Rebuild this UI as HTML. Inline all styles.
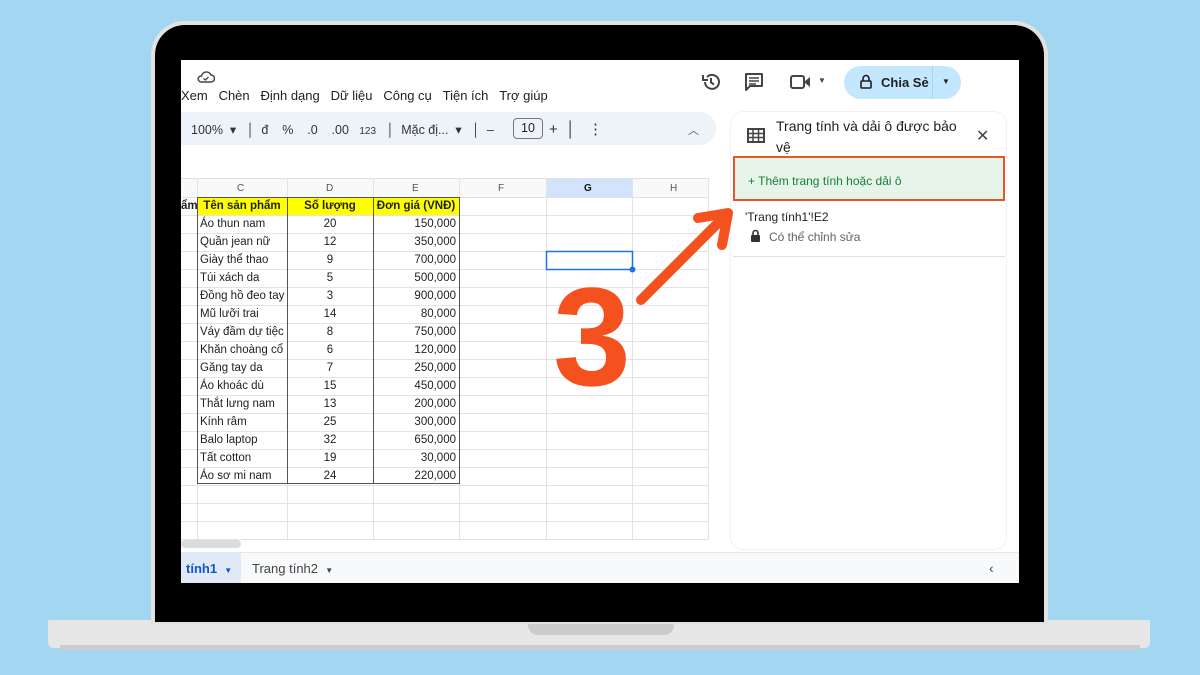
<!DOCTYPE html><html><head><meta charset="utf-8"><style>
*{margin:0;padding:0;box-sizing:border-box}
body{width:1200px;height:675px;background:#a3d7f1;position:relative;overflow:hidden;font-family:"Liberation Sans",Arial,sans-serif;color:#202124}
.a{position:absolute}
.cell{position:absolute;font-size:11.5px;height:18px;line-height:18px;white-space:nowrap}
</style></head><body>
<div class="a" style="left:48px;top:620px;width:1102px;height:28px;background:#e7e7e7;border-radius:2px 2px 6px 6px"></div>
<div class="a" style="left:60px;top:645px;width:1080px;height:5px;background:#cdcdcd"></div>
<div class="a" style="left:528px;top:620px;width:146px;height:15px;background:#cbcbcb;border-radius:0 0 10px 10px"></div>
<div class="a" style="left:151px;top:21px;width:897px;height:603px;background:#e2e2e2;border-radius:34px 34px 0 0"></div>
<div class="a" style="left:155px;top:25px;width:889px;height:597px;background:#000;border-radius:30px 30px 0 0"></div>
<div class="a" style="left:181px;top:60px;width:838px;height:523px;background:#fff;overflow:hidden">
 <svg class="a" style="left:16px;top:10px" width="18" height="13"><path d="M4 12H14A3.5 3.5 0 0 0 14 5 5 5 0 0 0 4.5 6 3 3 0 0 0 4 12Z" fill="none" stroke="#444" stroke-width="1.5"/><path d="M6.5 8.5L8.5 10 11.5 7" fill="none" stroke="#444" stroke-width="1.3"/></svg>
 <div class="a" style="left:0;top:28px;font-size:13px">Xem&nbsp;&nbsp;&nbsp;Chèn&nbsp;&nbsp;&nbsp;Định dạng&nbsp;&nbsp;&nbsp;Dữ liệu&nbsp;&nbsp;&nbsp;Công cụ&nbsp;&nbsp;&nbsp;Tiện ích&nbsp;&nbsp;&nbsp;Trợ giúp</div>
 <svg class="a" style="left:520px;top:12px" width="20" height="20"><path d="M4 10A7 7 0 1 0 6 5" fill="none" stroke="#444" stroke-width="2"/><path d="M2 3V8H7" fill="none" stroke="#444" stroke-width="2"/><path d="M10 6V10.5L13 12.5" fill="none" stroke="#444" stroke-width="2"/></svg>
 <svg class="a" style="left:563px;top:12px" width="20" height="20"><path d="M2 2H18V14H6L2 18Z" fill="none" stroke="#444" stroke-width="2" stroke-linejoin="round"/><path d="M5 6H15M5 9H15M5 12H12" stroke="#444" stroke-width="1.5"/></svg>
 <svg class="a" style="left:609px;top:14px" width="22" height="16"><rect x="1" y="2" width="13" height="12" rx="2" fill="none" stroke="#444" stroke-width="2"/><path d="M14 8L20 3V13Z" fill="#444"/></svg>
 <div class="a" style="left:637px;top:16px;font-size:8px;color:#444">▼</div>
 <div class="a" style="left:663px;top:6px;width:117px;height:33px;background:#c2e7ff;border-radius:17px"></div>
 <div class="a" style="left:751px;top:6px;width:1px;height:33px;background:#a8d4f0"></div>
 <svg class="a" style="left:679px;top:14px" width="12" height="15"><path d="M3 7V4.5A3 3 0 0 1 9 4.5V7" fill="none" stroke="#1f1f1f" stroke-width="1.6"/><rect x="1" y="7" width="10" height="7" rx="1" fill="none" stroke="#1f1f1f" stroke-width="1.6"/></svg>
 <div class="a" style="left:700px;top:15px;font-size:13px;font-weight:bold;color:#1f1f1f">Chia Sẻ</div>
 <div class="a" style="left:761px;top:17px;font-size:8px">▼</div>
 <div class="a" style="left:-20px;top:52px;width:555px;height:33px;background:#eef2f9;border-radius:17px"></div>
 <div class="a" style="left:10px;top:62px;font-size:12.5px;color:#333;white-space:nowrap">100%&nbsp;&nbsp;▾&nbsp;&nbsp;&nbsp;│&nbsp;&nbsp;đ&nbsp;&nbsp;&nbsp;&nbsp;%&nbsp;&nbsp;&nbsp;&nbsp;.0&nbsp;&nbsp;&nbsp;&nbsp;.00&nbsp;&nbsp;&nbsp;<span style="font-size:10px">123</span>&nbsp;&nbsp;&nbsp;│&nbsp;&nbsp;Mặc đị...&nbsp;&nbsp;▾&nbsp;&nbsp;&nbsp;│&nbsp;&nbsp;–&nbsp;&nbsp;</div>
 <div class="a" style="left:332px;top:58px;width:30px;height:21px;border:1px solid #777;border-radius:4px;font-size:12.5px;text-align:center;line-height:19px">10</div>
 <div class="a" style="left:368px;top:60px;font-size:15px;color:#333">+&nbsp;&nbsp;│&nbsp;&nbsp;&nbsp;⋮</div>
 <div class="a" style="left:507px;top:62px;font-size:11px;color:#555">︿</div>
 <svg class="a" style="left:0;top:0" width="528" height="523">
  <rect x="0" y="118" width="528" height="19" fill="#f8f9fa"/>
  <rect x="365" y="118" width="86" height="19" fill="#d3e3fd"/>
  <rect x="16" y="137" width="262" height="18" fill="#ffff00"/>
  <g stroke="#e1e1e1" stroke-width="1">
   <line x1="0" y1="118.5" x2="528" y2="118.5"/><line x1="0" y1="137.5" x2="528" y2="137.5"/>
  </g>
  <g stroke="#e3e3e3">
   <path d="M16.5 118V480M106.5 118V480M192.5 118V480M278.5 118V480M365.5 118V480M451.5 118V480M527.5 118V480"/>
  </g>
  <g id="rows" stroke="#e3e3e3"></g>
  <g stroke="#555" fill="none"><rect x="16.5" y="137.5" width="262" height="286"/>
   <path d="M106.5 137V424M192.5 137V424"/></g>
  <rect x="365.5" y="191.5" width="86" height="18" fill="none" stroke="#1a73e8" stroke-width="1.5"/>
  <circle cx="451.5" cy="209.5" r="3" fill="#1a73e8"/>
  <rect x="0" y="480" width="60" height="8" rx="4" fill="#dadce0"/>
  <rect x="528" y="140" width="7" height="16" rx="3" fill="#dadce0"/>
 </svg>
 <div class="cell" style="left:56px;top:120px;color:#555;font-size:10px">C</div>
 <div class="cell" style="left:145px;top:120px;color:#555;font-size:10px">D</div>
 <div class="cell" style="left:231px;top:120px;color:#555;font-size:10px">E</div>
 <div class="cell" style="left:317px;top:120px;color:#555;font-size:10px">F</div>
 <div class="cell" style="left:403px;top:120px;color:#111;font-size:10px;font-weight:bold">G</div>
 <div class="cell" style="left:489px;top:120px;color:#555;font-size:10px">H</div>
 <div id="cells"></div>
 <div class="a" style="left:550px;top:52px;width:275px;height:437px;background:#fff;border-radius:12px;box-shadow:0 0 0 1px #f0f2f5"></div>
 <svg class="a" style="left:566px;top:68px" width="18" height="15"><rect x="1" y="1" width="16" height="13" fill="none" stroke="#444" stroke-width="2"/><path d="M1 5.5H17M1 9.5H17M6 1V14M11.5 1V14" stroke="#444" stroke-width="1.5"/></svg>
 <div class="a" style="left:595px;top:56px;width:192px;font-size:14px;line-height:21px;color:#1f1f1f">Trang tính và dải ô được bảo vệ</div>
 <div class="a" style="left:795px;top:66px;font-size:16px;color:#444">✕</div>
 <div class="a" style="left:552px;top:96px;width:272px;height:45px;background:#e6f4ea;border:2px solid #e2582a"></div>
 <div class="a" style="left:567px;top:114px;font-size:12px;color:#188038">+ Thêm trang tính hoặc dải ô</div>
 <div class="a" style="left:564px;top:150px;font-size:12px;color:#1f1f1f">'Trang tính1'!E2</div>
 <svg class="a" style="left:569px;top:169px" width="11" height="13"><path d="M3 6V4A2.5 2.5 0 0 1 8 4V6" fill="none" stroke="#333" stroke-width="1.6"/><rect x="1" y="6" width="9" height="7" rx="1" fill="#333"/></svg>
 <div class="a" style="left:588px;top:170px;font-size:12px;color:#5f6368">Có thể chỉnh sửa</div>
 <div class="a" style="left:552px;top:196px;width:272px;height:1px;background:#e0e0e0"></div>
 <div class="a" style="left:0;top:492px;width:838px;height:31px;background:#f8f9fa;border-top:1px solid #e6e6e6"></div>
 <div class="a" style="left:0;top:492px;width:60px;height:31px;background:#e1e9f7"></div>
 <div class="a" style="left:5px;top:501px;font-size:13px;color:#0b57d0;font-weight:bold">tính1&nbsp;&nbsp;<span style="font-size:8px">▼</span></div>
 <div class="a" style="left:71px;top:501px;font-size:13px;color:#444">Trang tính2&nbsp;&nbsp;<span style="font-size:8px">▼</span></div>
 <div class="a" style="left:808px;top:500px;font-size:14px;color:#444">‹</div>
</div>
<svg class="a" style="left:0;top:0" width="1200" height="675">
 <path d="M641 300L722 219" stroke="#f4511e" stroke-width="10" stroke-linecap="round"/>
 <path d="M698 218L728 213L722 245" fill="none" stroke="#f4511e" stroke-width="10" stroke-linecap="round" stroke-linejoin="round"/>
</svg>
<div class="a" style="left:553px;top:262px;font-size:140px;font-weight:bold;color:#f4511e;line-height:150px">3</div>
<script>
var d=[["Áo thun nam",20,"150,000"],["Quần jean nữ",12,"350,000"],["Giày thể thao",9,"700,000"],["Túi xách da",5,"500,000"],["Đồng hồ đeo tay",3,"900,000"],["Mũ lưỡi trai",14,"80,000"],["Váy đầm dự tiệc",8,"750,000"],["Khăn choàng cổ",6,"120,000"],["Găng tay da",7,"250,000"],["Áo khoác dù",15,"450,000"],["Thắt lưng nam",13,"200,000"],["Kính râm",25,"300,000"],["Balo laptop",32,"650,000"],["Tất cotton",19,"30,000"],["Áo sơ mi nam",24,"220,000"]];
var h='<div class="cell" style="left:0;top:137px;font-weight:bold;width:16px;overflow:hidden;text-align:right">ẩm</div><div class="cell" style="left:16px;top:137px;width:90px;text-align:center;font-weight:bold">Tên sản phẩm</div><div class="cell" style="left:106px;top:137px;width:86px;text-align:center;font-weight:bold">Số lượng</div><div class="cell" style="left:192px;top:137px;width:86px;text-align:center;font-weight:bold">Đơn giá (VNĐ)</div>';
var r='';
for(var i=0;i<20;i++){var y=155+i*18;r+='<line x1="0" y1="'+(y+.5)+'" x2="528" y2="'+(y+.5)+'"/>';}
d.forEach(function(x,i){var y=155+i*18;h+='<div class="cell" style="left:19px;top:'+y+'px">'+x[0]+'</div><div class="cell" style="left:106px;top:'+y+'px;width:86px;text-align:center">'+x[1]+'</div><div class="cell" style="left:192px;top:'+y+'px;width:83px;text-align:right">'+x[2]+'</div>';});
document.getElementById('cells').innerHTML=h;document.getElementById('rows').innerHTML=r;
</script>
</body></html>
